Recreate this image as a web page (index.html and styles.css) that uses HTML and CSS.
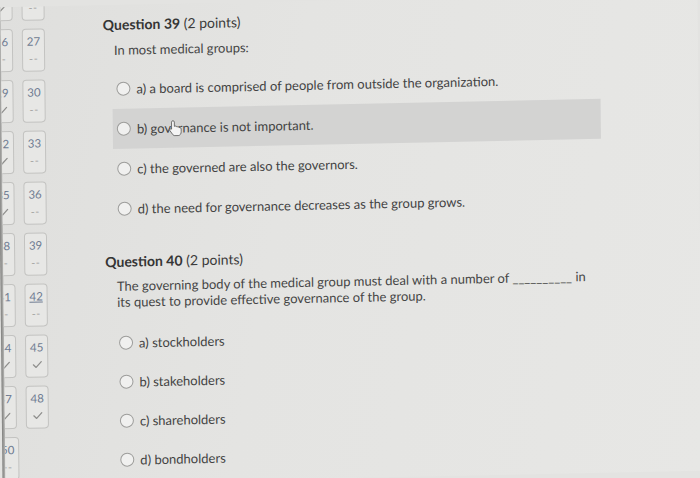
FILE: index.html
```html
<!DOCTYPE html>
<html lang="en">
<head>
<meta charset="utf-8">
<title>Quiz</title>
<link rel="stylesheet" href="styles.css">
</head>
<body>
<div class="page">
  <div class="edge"></div>
  <nav class="sidebar">
    <div class="tiles">
      <div class="tile"><span class="tile-num">23</span><svg class="check" viewBox="0 0 10 8" width="10" height="8"><path d="M1 4.2 L3.8 6.8 L9 1.2"/></svg></div>
      <div class="tile"><span class="tile-num">24</span><span class="dash">--</span></div>
      <div class="tile"><span class="tile-num">26</span><span class="dash">--</span></div>
      <div class="tile"><span class="tile-num">27</span><span class="dash">--</span></div>
      <div class="tile"><span class="tile-num">29</span><svg class="check" viewBox="0 0 10 8" width="10" height="8"><path d="M1 4.2 L3.8 6.8 L9 1.2"/></svg></div>
      <div class="tile"><span class="tile-num">30</span><span class="dash">--</span></div>
      <div class="tile"><span class="tile-num">32</span><svg class="check" viewBox="0 0 10 8" width="10" height="8"><path d="M1 4.2 L3.8 6.8 L9 1.2"/></svg></div>
      <div class="tile"><span class="tile-num">33</span><span class="dash">--</span></div>
      <div class="tile"><span class="tile-num">35</span><svg class="check" viewBox="0 0 10 8" width="10" height="8"><path d="M1 4.2 L3.8 6.8 L9 1.2"/></svg></div>
      <div class="tile"><span class="tile-num">36</span><span class="dash">--</span></div>
      <div class="tile"><span class="tile-num">38</span><span class="dash">--</span></div>
      <div class="tile"><span class="tile-num">39</span><span class="dash">--</span></div>
      <div class="tile"><span class="tile-num">41</span><span class="dash">--</span></div>
      <div class="tile"><span class="tile-num current">42</span><span class="dash">--</span></div>
      <div class="tile"><span class="tile-num">44</span><svg class="check" viewBox="0 0 10 8" width="10" height="8"><path d="M1 4.2 L3.8 6.8 L9 1.2"/></svg></div>
      <div class="tile"><span class="tile-num">45</span><svg class="check" viewBox="0 0 10 8" width="10" height="8"><path d="M1 4.2 L3.8 6.8 L9 1.2"/></svg></div>
      <div class="tile"><span class="tile-num">47</span><svg class="check" viewBox="0 0 10 8" width="10" height="8"><path d="M1 4.2 L3.8 6.8 L9 1.2"/></svg></div>
      <div class="tile"><span class="tile-num">48</span><svg class="check" viewBox="0 0 10 8" width="10" height="8"><path d="M1 4.2 L3.8 6.8 L9 1.2"/></svg></div>
      <div class="tile tile-last"><span class="tile-num">50</span><span class="dash">--</span></div>
    </div>
  </nav>
  <main class="main">
    <section class="question q39">
      <h2 class="q-title"><b>Question 39</b> (2 points)</h2>
      <p class="prompt">In most medical groups:</p>
      <div class="options">
        <label class="option"><span class="radio"></span><span>a) a board is comprised of people from outside the organization.</span></label>
        <label class="option selected"><span class="radio"></span><span>b) governance is not important.</span>
          <svg class="cursor" viewBox="0 0 16 18" width="15" height="17"><path d="M5.5 1 C6.3 1 7 1.7 7 2.5 V7 L8 6.8 C8.8 6.7 9.4 7.1 9.5 7.6 L10.5 7.6 C11.3 7.6 11.8 8 12 8.5 L12.8 8.5 C13.6 8.5 14.2 9.1 14.2 9.9 V13 C14.2 15 13 17 11 17 H7.5 C6.3 17 5.5 16.3 4.8 15.3 L2.2 11.5 C1.8 10.9 2 10.1 2.6 9.8 C3.2 9.5 3.8 9.7 4 10 V2.5 C4 1.7 4.7 1 5.5 1 Z"/></svg>
        </label>
        <label class="option"><span class="radio"></span><span>c) the governed are also the governors.</span></label>
        <label class="option"><span class="radio"></span><span>d) the need for governance decreases as the group grows.</span></label>
      </div>
    </section>
    <section class="question q40">
      <h2 class="q-title"><b>Question 40</b> (2 points)</h2>
      <p class="prompt">The governing body of the medical group must deal with a number of __________ in its quest to provide effective governance of the group.</p>
      <div class="options">
        <label class="option"><span class="radio"></span><span>a) stockholders</span></label>
        <label class="option"><span class="radio"></span><span>b) stakeholders</span></label>
        <label class="option"><span class="radio"></span><span>c) shareholders</span></label>
        <label class="option"><span class="radio"></span><span>d) bondholders</span></label>
      </div>
    </section>
  </main>
</div>
</body>
</html>
```

FILE: styles.css
```css
html, body {
  margin: 0;
  padding: 0;
  background: #e3e3e1;
}

body {
  width: 700px;
  height: 478px;
  overflow: hidden;
  font-family: Lato, "Noto Sans", "Liberation Sans", sans-serif;
}

.page {
  display: flex;
  width: 700px;
  height: 478px;
  background: linear-gradient(100deg, #dfdfdd 0%, #e4e4e2 40%, #e7e7e5 100%);
  transform: rotate(-0.6deg) skewY(-0.6deg);
  transform-origin: 350px 239px;
}

.edge {
  flex: none;
  width: 3px;
  background: linear-gradient(to right, #7f7f7d, #b9b9b7);
}

.sidebar {
  flex: none;
  width: 57px;
  overflow: hidden;
}

.tiles {
  display: grid;
  grid-template-columns: 23px 23px;
  grid-auto-rows: 43px;
  column-gap: 9px;
  row-gap: 8px;
  margin-left: -11px;
  margin-top: -29px;
}

.tile {
  box-sizing: border-box;
  border: 1px solid #c3c3c1;
  border-radius: 4px;
  background: #e7e7e5;
  display: flex;
  flex-direction: column;
  align-items: center;
  padding-top: 5px;
}

.tile-last {
  transform: translateX(2px);
}

.tile-num {
  display: block;
  height: 14px;
  font-size: 11.5px;
  line-height: 14px;
  color: #6f7c92;
}

.tile-num.current {
  text-decoration: underline;
}

.dash {
  display: block;
  margin-top: 4px;
  font-size: 11px;
  line-height: 12px;
  letter-spacing: 0.5px;
  color: #9c9c9a;
}

.check {
  display: block;
  flex: none;
  margin-top: 6px;
}

.check path {
  fill: none;
  stroke: #8f8f8d;
  stroke-width: 1.3;
  stroke-linecap: round;
  stroke-linejoin: round;
}

.main {
  flex: 1;
  padding-left: 45px;
  padding-top: 11px;
}

.q-title {
  margin: 0;
  font-size: 14px;
  line-height: 18px;
  font-weight: normal;
  color: #3b3b3b;
}

.q-title b {
  font-weight: 700;
  color: #353535;
}

.prompt {
  margin: 8px 0 0 11px;
  font-size: 13px;
  line-height: 16px;
  color: #454545;
}

.options {
  margin: 11px 0 0 9px;
  width: 488px;
}

.option {
  position: relative;
  display: flex;
  align-items: center;
  height: 40px;
  padding-left: 4px;
  font-size: 13px;
  color: #424242;
}

.radio {
  flex: none;
  box-sizing: border-box;
  width: 14px;
  height: 14px;
  margin-right: 6px;
  border: 1.5px solid #9d9d9b;
  border-radius: 50%;
  background: #f0f0ef;
}

.option.selected {
  background: #d3d3d2;
}

.cursor {
  position: absolute;
  left: 55px;
  top: 12px;
}

.cursor path {
  fill: #f4f4f4;
  stroke: #5a5a5a;
  stroke-width: 0.9;
}

.q40 {
  margin-top: 24px;
}

.q40 .prompt {
  margin-top: 7px;
  margin-left: 11.5px;
  width: 485px;
}

.q40 .options {
  margin-top: 13px;
}

.q40 .option {
  height: 39px;
}
```
